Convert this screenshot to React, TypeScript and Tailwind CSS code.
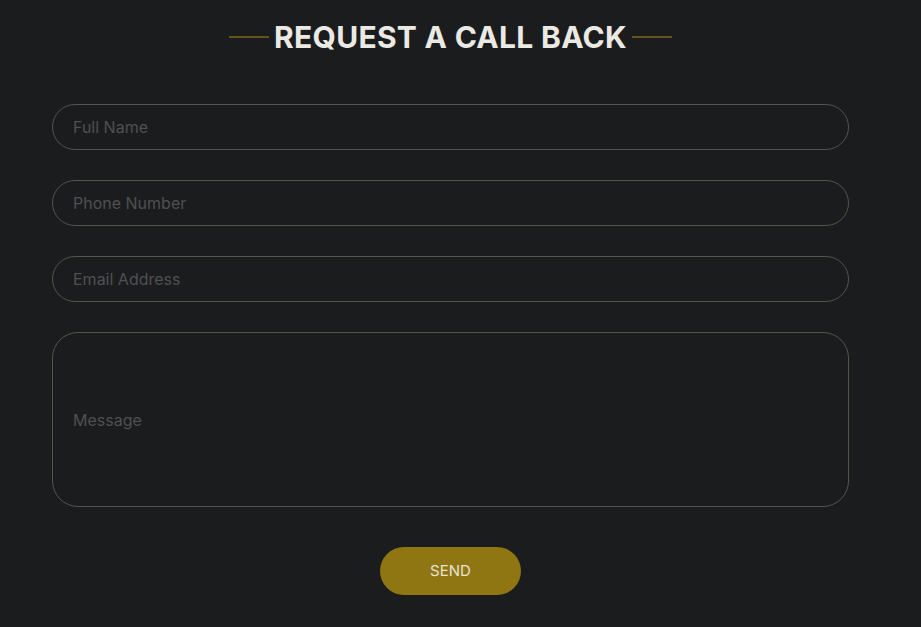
import React from "react";

const fieldClass =
  "w-full h-[46px] rounded-full border border-[#55534a] bg-transparent px-5 pb-px text-[16px] text-[#d8d8d8] placeholder:text-[#4f5053] outline-none";

export default function App() {
  return (
    <div className="min-h-[627px] w-full bg-[#1b1c1e] font-['Inter','Open_Sans',sans-serif]">
      <div className="w-[797px] ml-[52px] pt-[16px]">
        {/* Heading */}
        <div className="flex items-center justify-center gap-[5px] h-[42px]">
          <span className="h-[2px] w-[40px] bg-[#64531a]" />
          <h2 className="text-[30px] font-bold tracking-[0.3px] text-[#ebe9e3] leading-none">
            REQUEST A CALL BACK
          </h2>
          <span className="h-[2px] w-[40px] bg-[#64531a]" />
        </div>

        {/* Form */}
        <form className="mt-[46px] flex flex-col gap-[30px]" onSubmit={(e) => e.preventDefault()}>
          <input className={fieldClass} placeholder="Full Name" />
          <input className={fieldClass} placeholder="Phone Number" />
          <input className={fieldClass} placeholder="Email Address" />
          <div className="h-[175px] rounded-[26px] border border-[#55534a] flex items-center px-5">
            <textarea
              rows={1}
              className="w-full resize-none bg-transparent text-[16px] leading-6 text-[#d8d8d8] placeholder:text-[#4f5053] outline-none"
              placeholder="Message"
            />
          </div>
          <div className="flex justify-center mt-[10px]">
            <button
              type="submit"
              className="h-[48px] w-[141px] rounded-full bg-[#8f7612] text-[15px] text-[#e8e4d4]"
            >
              SEND
            </button>
          </div>
        </form>
      </div>
    </div>
  );
}
